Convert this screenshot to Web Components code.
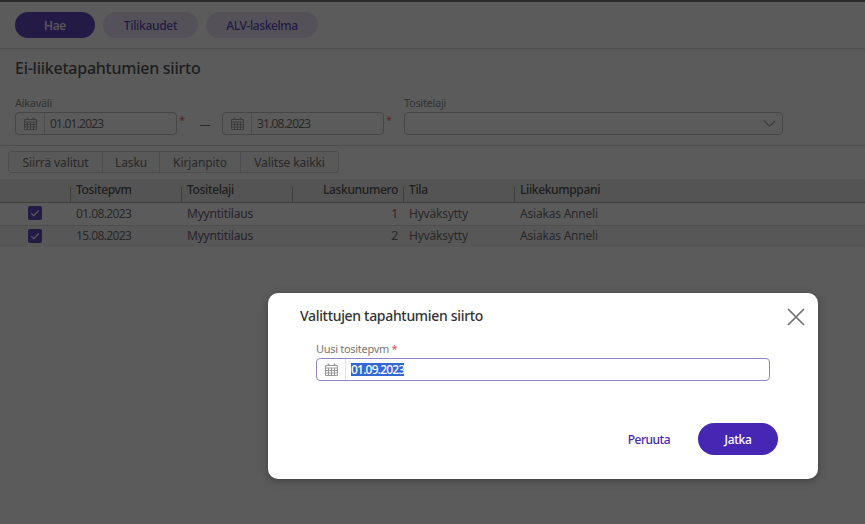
<!DOCTYPE html>
<html lang="fi">
<head>
<meta charset="utf-8">
<title>Ei-liiketapahtumien siirto</title>
<style>
  html, body { margin: 0; height: 100%; }
  body { font-family: "Noto Sans", "Open Sans", sans-serif; font-size: 12px; color: #333; background: #fff; overflow: hidden; }
</style>
</head>
<body>
<transfer-page></transfer-page>
<script>
const CALENDAR = /*html*/ `
  <svg width="13" height="13" viewBox="0 0 13 13" fill="none" stroke="#9a9a9a" stroke-width="1">
    <path d="M.5 2.5h12v10H.5z"/>
    <path d="M.5 5h12M.5 7.5h12M.5 10h12M3.5 5v7.5M6.5 5v7.5M9.5 5v7.5"/>
    <path d="M3.5 .5v2M9.5 .5v2" stroke-width="1.6"/>
  </svg>`;

class PillButton extends HTMLElement {
  constructor() {
    super();
    this.attachShadow({ mode: "open" });
    this.shadowRoot.innerHTML = /*html*/ `
      <style>
        :host {
          display: inline-flex;
          align-items: center;
          justify-content: center;
          box-sizing: border-box;
          height: var(--pill-height, 26px);
          width: var(--pill-width, auto);
          border-radius: 16px;
          font-weight: 500;
          font-size: 12px;
          letter-spacing: var(--pill-track, -0.3px);
          background: #e6e2f3;
          color: #4527b4;
          white-space: nowrap;
        }
        :host([primary]) { background: #4527b4; color: #fff; }
        :host([plain]) { background: transparent; }
      </style>
      <slot></slot>`;
  }
}

class DateField extends HTMLElement {
  constructor() {
    super();
    this.attachShadow({ mode: "open" });
  }
  connectedCallback() {
    const value = this.getAttribute("value") || "";
    this.shadowRoot.innerHTML = /*html*/ `
      <style>
        :host {
          display: flex;
          box-sizing: border-box;
          height: 23px;
          width: var(--date-width, 162px);
          border: 1px solid var(--date-border, #b9b9b9);
          border-radius: 4px;
          align-items: stretch;
          font-size: 12px;
          letter-spacing: -0.8px;
          color: #555;
          background: #fff;
        }
        .icon {
          width: 28px;
          flex: none;
          display: flex;
          align-items: center;
          justify-content: center;
          border-right: 1px solid var(--date-divider, #d0d0d0);
        }
        .value { padding-left: 5px; display: flex; align-items: center; }
        :host([selected]) .value span { background: #3367d1; color: #fff; font-weight: 500; line-height: 13px; }
      </style>
      <div class="icon">${CALENDAR}</div>
      <div class="value"><span>${value}</span></div>`;
  }
}

class FormField extends HTMLElement {
  constructor() {
    super();
    this.attachShadow({ mode: "open" });
  }
  connectedCallback() {
    const label = this.getAttribute("label") || "";
    const req = this.hasAttribute("required");
    this.shadowRoot.innerHTML = /*html*/ `
      <style>
        :host { display: block; font-size: 11px; color: #777; }
        .label { line-height: 14px; height: 16px; letter-spacing: -0.3px; }
        .req { color: #d9534f; }
      </style>
      <div class="label">${label}${req ? ' <span class="req">*</span>' : ""}</div>
      <slot></slot>`;
  }
}

class ToolbarGroup extends HTMLElement {
  constructor() {
    super();
    this.attachShadow({ mode: "open" });
    this.shadowRoot.innerHTML = /*html*/ `
      <style>
        :host { display: inline-flex; border: 1px solid #d0d0d0; border-radius: 3px; height: 20px; background: #f7f7f7; font-size: 12px; letter-spacing: -0.1px; color: #555; }
        ::slotted(span) { display: flex; align-items: center; justify-content: center; box-sizing: border-box; border-left: 1px solid #d0d0d0; }
        ::slotted(span:first-child) { border-left: 0; }
      </style>
      <slot></slot>`;
  }
}

class DataTable extends HTMLElement {
  constructor() {
    super();
    this.attachShadow({ mode: "open" });
  }
  connectedCallback() {
    const rows = [
      ["01.08.2023", "Myyntitilaus", "1", "Hyväksytty", "Asiakas Anneli"],
      ["15.08.2023", "Myyntitilaus", "2", "Hyväksytty", "Asiakas Anneli"],
    ];
    const check = `<svg width="14" height="14" viewBox="0 0 14 14"><rect width="14" height="14" rx="2" fill="#4527b4"/><path d="M3.2 7.2l2.6 2.5 5-5.2" fill="none" stroke="#fff" stroke-width="1.2"/></svg>`;
    this.shadowRoot.innerHTML = /*html*/ `
      <style>
        :host { display: block; font-size: 12px; letter-spacing: -0.2px; color: #555; }
        .row {
          display: grid;
          grid-template-columns: 70px 111px 111px 111px 111px 1fr;
          height: 22px;
          align-items: center;
          border-bottom: 1px solid #d4d4d4;
        }
        .row .cell { position: relative; top: -1px; }
        .row.even { background: #f2f2f2; height: 21px; border-bottom: 0; }
        .row.head { background: #e8e8e8; height: 23px; border-bottom: 1px solid #9f9f9f; align-items: stretch; font-weight: 500; color: #333; letter-spacing: -0.35px; }
        .cell { padding-left: 6px; white-space: nowrap; }
        .head .cell { top: 0; line-height: 21px; }
        .head .cell.sep::before {
          content: ""; position: absolute; left: 0; top: 8px; height: 15px; width: 1px; background: #9f9f9f;
        }
        .date { letter-spacing: -0.6px; }
        .num { text-align: right; padding: 0 5px 0 0; }
        .chk { display: flex; justify-content: center; padding: 0; }
      </style>
      <div class="row head">
        <div class="cell"></div>
        <div class="cell sep">Tositepvm</div>
        <div class="cell sep">Tositelaji</div>
        <div class="cell sep num">Laskunumero</div>
        <div class="cell sep">Tila</div>
        <div class="cell sep">Liikekumppani</div>
      </div>
      ${rows.map((r, i) => `
        <div class="row ${i ? "even" : ""}">
          <div class="cell chk">${check}</div>
          <div class="cell date">${r[0]}</div>
          <div class="cell" style="color:#5b3a6b">${r[1]}</div>
          <div class="cell num">${r[2]}</div>
          <div class="cell">${r[3]}</div>
          <div class="cell">${r[4]}</div>
        </div>`).join("")}`;
  }
}

class ModalDialog extends HTMLElement {
  constructor() {
    super();
    this.attachShadow({ mode: "open" });
    this.shadowRoot.innerHTML = /*html*/ `
      <style>
        :host {
          position: absolute;
          inset: 0;
          background: rgba(22, 22, 22, 0.7);
          display: block;
        }
        .box {
          position: absolute;
          left: 268px;
          top: 293px;
          width: 550px;
          height: 186px;
          box-sizing: border-box;
          background: #fff;
          border-radius: 10px;
          box-shadow: 0 2px 8px rgba(0,0,0,.3);
          padding: 13px 40px 0 32px;
          display: flex;
          flex-direction: column;
        }
        h2 { margin: 0; font-size: 14px; font-weight: 500; line-height: 20px; letter-spacing: -0.32px; color: #333; }
        .close { position: absolute; right: 13px; top: 15px; width: 18px; height: 18px; }
        .body { padding: 16px 8px 0 16px; flex: 1; }
        .foot { display: flex; justify-content: flex-end; align-items: center; gap: 28px; padding-bottom: 24px; }
      </style>
      <div class="box">
        <h2><slot name="title"></slot></h2>
        <svg class="close" viewBox="0 0 18 18" fill="none" stroke="#6f6f6f" stroke-width="1.7">
          <path d="M1 1l16 16M17 1L1 17"/>
        </svg>
        <div class="body"><slot></slot></div>
        <div class="foot"><slot name="actions"></slot></div>
      </div>`;
  }
}

class TransferPage extends HTMLElement {
  constructor() {
    super();
    this.attachShadow({ mode: "open" });
    this.shadowRoot.innerHTML = /*html*/ `
      <style>
        :host { display: block; position: relative; width: 865px; height: 524px; overflow: hidden; background: #fff; }
        .top { border-top: 2px solid #5a5a5a; }
        .nav { display: flex; gap: 8px; padding: 10px 15px 10px; border-bottom: 1px solid #d4d4d4; height: 26px; }
        h1 { margin: 0; padding: 8px 15px 0; font-size: 16px; font-weight: 500; line-height: 22px; letter-spacing: -0.25px; color: #333; height: 39px; }
        .filters { display: flex; padding: 0 15px 10px; border-bottom: 1px solid #d4d4d4; height: 39px; align-items: flex-start; }
        .range { display: flex; align-items: center; }
        .star { color: #d9534f; font-size: 11px; width: 9px; padding-left: 2px; align-self: flex-start; }
        .dash { width: 34px; text-align: center; color: #555; }
        .select {
          box-sizing: border-box; width: 379px; height: 23px; border: 1px solid #b9b9b9; border-radius: 4px;
          display: flex; align-items: center; justify-content: flex-end; padding-right: 6px; background: #fff;
        }
        .tools { padding: 5px 8px 6px; height: 22px; }
        .gap { margin-left: 9px; }
        modal-dialog date-field { --date-width: 454px; --date-border: #8f86c4; --date-divider: #e2e2e2; }
      </style>
      <div class="top">
        <div class="nav">
          <pill-button primary style="--pill-width:80px">Hae</pill-button>
          <pill-button style="--pill-width:95px">Tilikaudet</pill-button>
          <pill-button style="--pill-width:112px;--pill-track:-0.4px">ALV-laskelma</pill-button>
        </div>
        <h1>Ei-liiketapahtumien siirto</h1>
        <div class="filters">
          <form-field label="Aikaväli">
            <div class="range">
              <date-field value="01.01.2023"></date-field>
              <span class="star">*</span>
              <span class="dash">—</span>
              <date-field value="31.08.2023"></date-field>
              <span class="star">*</span>
            </div>
          </form-field>
          <form-field label="Tositelaji" class="gap">
            <div class="select">
              <svg width="13" height="7" viewBox="0 0 13 7" fill="none" stroke="#9a9a9a" stroke-width="1.2"><path d="M1 .8l5.5 5.4L12 .8"/></svg>
            </div>
          </form-field>
        </div>
        <div class="tools">
          <toolbar-group>
            <span style="width:93px">Siirrä valitut</span>
            <span style="width:57px">Lasku</span>
            <span style="width:81px">Kirjanpito</span>
            <span style="width:98px">Valitse kaikki</span>
          </toolbar-group>
        </div>
        <data-table></data-table>
      </div>
      <modal-dialog>
        <span slot="title">Valittujen tapahtumien siirto</span>
        <form-field label="Uusi tositepvm" required>
          <date-field value="01.09.2023" selected></date-field>
        </form-field>
        <pill-button plain slot="actions" style="--pill-track:-0.5px">Peruuta</pill-button>
        <pill-button primary slot="actions" style="--pill-width:80px;--pill-height:32px">Jatka</pill-button>
      </modal-dialog>`;
  }
}

customElements.define("pill-button", PillButton);
customElements.define("date-field", DateField);
customElements.define("form-field", FormField);
customElements.define("toolbar-group", ToolbarGroup);
customElements.define("data-table", DataTable);
customElements.define("modal-dialog", ModalDialog);
customElements.define("transfer-page", TransferPage);
</script>
</body>
</html>
